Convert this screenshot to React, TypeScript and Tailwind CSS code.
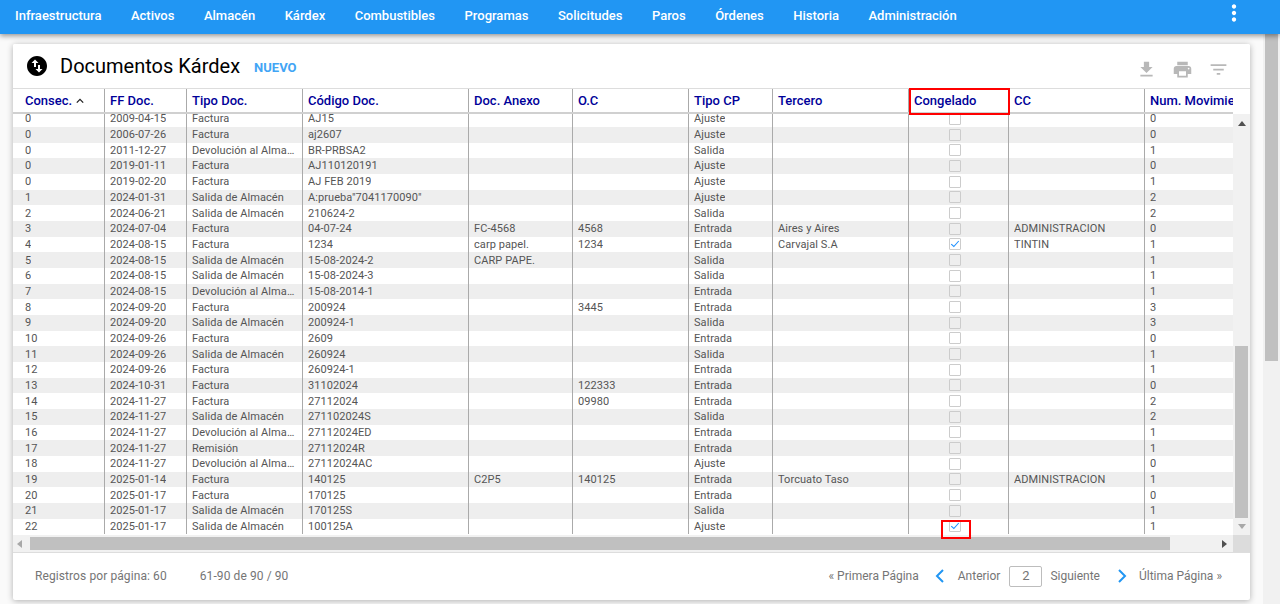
const nav = ["Infraestructura","Activos","Almacén","Kárdex","Combustibles","Programas","Solicitudes","Paros","Órdenes","Historia","Administración"];

const cols = [
  { name: "Consec.", cls: "w-[92px] pl-3 pr-1 border-r border-[#aaaaaa]" },
  { name: "FF Doc.", cls: "w-[82px] px-[5px] border-r border-[#aaaaaa]" },
  { name: "Tipo Doc.", cls: "w-[116px] px-[5px] border-r border-[#aaaaaa]" },
  { name: "Código Doc.", cls: "w-[166px] px-[5px] border-r border-[#aaaaaa]" },
  { name: "Doc. Anexo", cls: "w-[104px] px-[5px] border-r border-[#aaaaaa]" },
  { name: "O.C", cls: "w-[116px] px-[5px] border-r border-[#aaaaaa]" },
  { name: "Tipo CP", cls: "w-[84px] px-[5px] border-r border-[#aaaaaa]" },
  { name: "Tercero", cls: "w-[136px] px-[5px] border-r border-[#aaaaaa]" },
  { name: "Congelado", cls: "w-[100px] px-[5px] border-r border-[#aaaaaa]" },
  { name: "CC", cls: "w-[136px] px-[5px] border-r border-[#aaaaaa]" },
  { name: "Num. Movimientos", cls: "w-[88px] pl-[5px]" },
];

const D = "Devolución al Almacén";
const S = "Salida de Almacén";
const F = "Factura";
const rows: [string,string,string,string,string,string,string,string,boolean,string,string][] = [
  ["0","2009-04-15",F,"AJ15","","","Ajuste","",false,"","0"],
  ["0","2006-07-26",F,"aj2607","","","Ajuste","",false,"","0"],
  ["0","2011-12-27",D,"BR-PRBSA2","","","Salida","",false,"","1"],
  ["0","2019-01-11",F,"AJ110120191","","","Ajuste","",false,"","0"],
  ["0","2019-02-20",F,"AJ FEB 2019","","","Ajuste","",false,"","1"],
  ["1","2024-01-31",S,"A:prueba\"7041170090\"","","","Ajuste","",false,"","2"],
  ["2","2024-06-21",S,"210624-2","","","Salida","",false,"","2"],
  ["3","2024-07-04",F,"04-07-24","FC-4568","4568","Entrada","Aires y Aires",false,"ADMINISTRACION","0"],
  ["4","2024-08-15",F,"1234","carp papel.","1234","Entrada","Carvajal S.A",true,"TINTIN","1"],
  ["5","2024-08-15",S,"15-08-2024-2","CARP PAPE.","","Salida","",false,"","1"],
  ["6","2024-08-15",S,"15-08-2024-3","","","Salida","",false,"","1"],
  ["7","2024-08-15",D,"15-08-2014-1","","","Entrada","",false,"","1"],
  ["8","2024-09-20",F,"200924","","3445","Entrada","",false,"","3"],
  ["9","2024-09-20",S,"200924-1","","","Salida","",false,"","3"],
  ["10","2024-09-26",F,"2609","","","Entrada","",false,"","0"],
  ["11","2024-09-26",S,"260924","","","Salida","",false,"","1"],
  ["12","2024-09-26",F,"260924-1","","","Entrada","",false,"","1"],
  ["13","2024-10-31",F,"31102024","","122333","Entrada","",false,"","0"],
  ["14","2024-11-27",F,"27112024","","09980","Entrada","",false,"","2"],
  ["15","2024-11-27",S,"271102024S","","","Salida","",false,"","2"],
  ["16","2024-11-27",D,"27112024ED","","","Entrada","",false,"","1"],
  ["17","2024-11-27","Remisión","27112024R","","","Entrada","",false,"","1"],
  ["18","2024-11-27",D,"27112024AC","","","Ajuste","",false,"","0"],
  ["19","2025-01-14",F,"140125","C2P5","140125","Entrada","Torcuato Taso",false,"ADMINISTRACION","1"],
  ["20","2025-01-17",F,"170125","","","Entrada","",false,"","0"],
  ["21","2025-01-17",S,"170125S","","","Salida","",false,"","1"],
  ["22","2025-01-17",S,"100125A","","","Ajuste","",true,"","1"],
];

function MIcon({ d, className }: { d: string; className: string }) {
  return (
    <svg viewBox="0 0 24 24" className={className} fill="currentColor">
      <path d={d} />
    </svg>
  );
}

function Check({ on }: { on: boolean }) {
  return (
    <div className="w-3 h-3 ml-[35px] border border-[#cccccc] rounded-[1px] flex items-center justify-center">
      {on && (
        <svg viewBox="0 0 12 12" className="w-[10px] h-[10px]" fill="none" stroke="#1e90ff" strokeWidth="1.3">
          <path d="M1.5 6.2 L4.6 9 L10.5 2.4" />
        </svg>
      )}
    </div>
  );
}

function Chevron({ dir }: { dir: "l" | "r" }) {
  return (
    <svg viewBox="0 0 10 14" className="w-[10px] h-[14px]" fill="none" stroke="#2196f3" strokeWidth="2">
      <path d={dir === "l" ? "M8 1 L2 7 L8 13" : "M2 1 L8 7 L2 13"} />
    </svg>
  );
}

export default function App() {
  return (
    <div className="w-[1280px] h-[604px] overflow-hidden flex flex-col bg-[#fafafa] font-['Roboto',sans-serif]">
      <header className="relative z-20 h-[34px] shrink-0 bg-[#2196f3] shadow-[0_2px_5px_rgba(0,0,0,0.4)] flex items-center text-white">
        <nav className="flex flex-1 pl-[15px] gap-[29.5px] pb-[3px]">
          {nav.map((n) => (
            <span key={n} className="text-[13px] font-medium leading-[16px]">{n}</span>
          ))}
        </nav>
        <MIcon
          className="w-[26px] h-[26px] mr-[33px] mb-[8px]"
          d="M12 8c1.1 0 2-.9 2-2s-.9-2-2-2-2 .9-2 2 .9 2 2 2zm0 2c-1.1 0-2 .9-2 2s.9 2 2 2 2-.9 2-2-.9-2-2-2zm0 6c-1.1 0-2 .9-2 2s.9 2 2 2 2-.9 2-2-.9-2-2-2z"
        />
      </header>

      <div className="flex flex-1 min-h-0">
        <main className="w-[1263px] pl-[13px] pr-[13px] pt-[10px]">
          <section className="h-[556px] bg-white rounded-[2px] shadow-[0_1px_6px_rgba(0,0,0,0.3)] flex flex-col">
            <div className="relative z-10 h-[44px] shrink-0 flex items-center bg-white rounded-t-[2px]">
              <MIcon
                className="w-6 h-6 ml-3 text-black"
                d="M12 2C6.48 2 2 6.48 2 12s4.48 10 10 10 10-4.48 10-10S17.52 2 12 2zM6.5 9L10 5.5 13.5 9H11v4H9V9H6.5zm11 6L14 18.5 10.5 15H13v-4h2v4h2.5z"
              />
              <h1 className="ml-[11px] text-[20px] leading-6 font-normal text-black">Documentos Kárdex</h1>
              <span className="ml-[14px] text-[13px] font-bold text-[#42a5f5] mt-[4px]">NUEVO</span>
              <div className="ml-auto mr-[21.5px] flex items-center gap-[15px] text-[#b8b8b8] mt-[6px]">
                <MIcon className="w-[21px] h-[21px]" d="M19 9h-4V3H9v6H5l7 7 7-7zM5 18v2h14v-2H5z" />
                <MIcon className="w-[21px] h-[21px]" d="M19 8H5c-1.66 0-3 1.34-3 3v6h4v4h12v-4h4v-6c0-1.66-1.34-3-3-3zm-3 11H8v-5h8v5zm3-7c-.55 0-1-.45-1-1s.45-1 1-1 1 .45 1 1-.45 1-1 1zm-1-9H6v4h12V3z" />
                <MIcon className="w-[21px] h-[21px]" d="M10 18h4v-2h-4v2zM3 6v2h18V6H3zm3 7h12v-2H6v2z" />
              </div>
            </div>

            <div className="relative z-10 h-[26px] shrink-0 flex bg-white border-t border-[#dddddd]">
              <div className="flex w-[1220px] border-b-2 border-[#d0d0d0] overflow-hidden">
                {cols.map((c) => (
                  <div key={c.name} className={`${c.cls} relative shrink-0 flex items-center text-[13px] font-medium text-[#000099] whitespace-nowrap overflow-hidden leading-4`}>
                    {c.name}
                    {c.name === "Consec." && (
                      <svg viewBox="0 0 10 6" className="w-2 h-[6px] ml-[4px]" fill="none" stroke="#222" strokeWidth="1.6">
                        <path d="M1 5 L5 1 L9 5" />
                      </svg>
                    )}
                  </div>
                ))}
              </div>
              <div className="flex-1" />
              <div className="absolute left-[896px] top-[-1px] w-[101px] h-[27px] border-2 border-[#ff0000]" />
            </div>

            <div className="relative h-[421px] shrink-0 flex">
              <div className="w-[1220px] mt-[-2.68px]">
                {rows.map((r, i) => (
                  <div key={i} className={`flex h-[15.68px] text-[11px] leading-[15px] tracking-[0.07px] text-[#555555] ${i % 2 === 1 ? "bg-[#eeeeee]" : "bg-white"}`}>
                    {cols.map((c, j) => (
                      <div key={j} className={`${c.cls} shrink-0 h-full pb-[0.4px] flex items-center overflow-hidden`}>
                        {j === 8 ? <Check on={r[8] as boolean} /> : <span className="truncate">{r[j] as string}</span>}
                      </div>
                    ))}
                  </div>
                ))}
              </div>
              <div className="w-[17px] bg-[#f1f1f1] flex flex-col items-center">
                <svg viewBox="0 0 8 5" className="w-2 h-[5px] mt-[7px]" fill="#505050"><path d="M4 0 L8 5 L0 5 Z" /></svg>
                <div className="w-[13px] h-[172px] bg-[#c0c0c0] mt-[220px]" />
                <svg viewBox="0 0 8 5" className="w-2 h-[5px] mt-[6px]" fill="#a8a8a8"><path d="M0 0 L8 0 L4 5 Z" /></svg>
              </div>
              <div className="absolute left-[928px] top-[406px] w-[30px] h-[19px] border-2 border-[#ff0000]" />
            </div>

            <div className="h-[17px] shrink-0 flex border-b border-[#dddddd] box-content">
              <div className="w-[1220px] bg-[#f1f1f1] flex items-center">
                <svg viewBox="0 0 5 8" className="w-[5px] h-2 ml-[4px]" fill="#a8a8a8"><path d="M5 0 L5 8 L0 4 Z" /></svg>
                <div className="w-[1140px] h-[13px] bg-[#c0c0c0] ml-[8px]" />
                <svg viewBox="0 0 5 8" className="w-[5px] h-2 ml-[52px]" fill="#505050"><path d="M0 0 L5 4 L0 8 Z" /></svg>
              </div>
              <div className="flex-1 bg-[#dcdcdc]" />
            </div>

            <footer className="flex-1 flex items-center text-[12px] text-[#757575] pb-[1px]">
              <span className="ml-[22px] tracking-[0.09px]">Registros por página: 60</span>
              <span className="ml-[33px] tracking-[0.09px]">61-90 de 90 / 90</span>
              <div className="ml-auto mr-[28px] flex items-center">
                <span>« Primera Página</span>
                <span className="ml-[16px]"><Chevron dir="l" /></span>
                <span className="ml-[13px]">Anterior</span>
                <span className="ml-[9px] w-[33px] h-[21px] border border-[#bdbdbd] rounded-[2px] flex items-center justify-center text-[13px]">2</span>
                <span className="ml-[8px]">Siguiente</span>
                <span className="ml-[17px]"><Chevron dir="r" /></span>
                <span className="ml-[12px]">Última Página »</span>
              </div>
            </footer>
          </section>
        </main>
        <aside className="w-[17px] bg-[#f1f1f1] flex justify-center">
          <div className="w-[13px] h-[327px] bg-[#c0c0c0]" />
        </aside>
      </div>
    </div>
  );
}
